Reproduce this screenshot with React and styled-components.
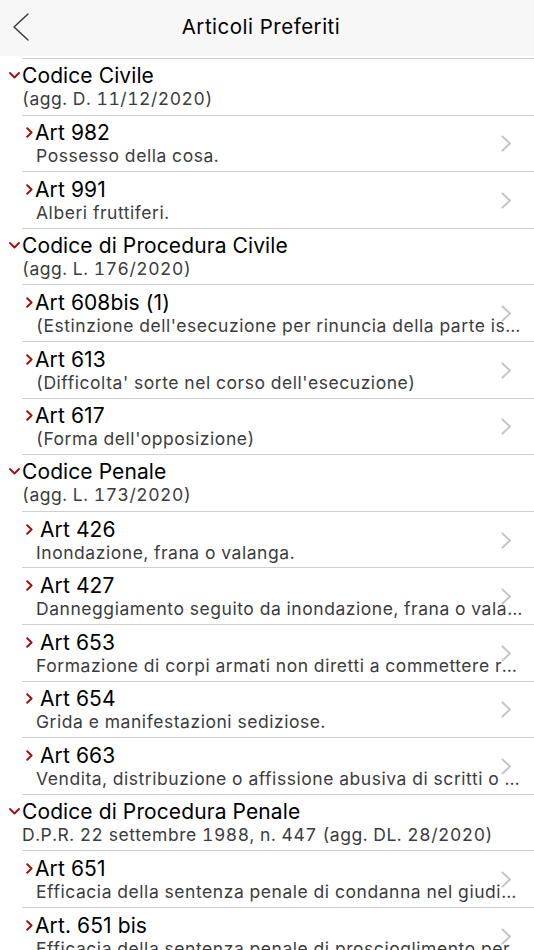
import React from 'react';
import styled, { createGlobalStyle } from 'styled-components';

const GlobalStyle = createGlobalStyle`
	html, body {
		margin: 0;
		padding: 0;
		background: #fff;
		overflow: hidden;
	}
	body {
		font-family: Inter, Roboto, "Liberation Sans", sans-serif;
		color: #000;
	}
`;

const Page = styled.div`
	width: 534px;
	height: 950px;
	overflow: hidden;
	background: #fff;
`;

const Header = styled.div`
	height: 56px;
	background: #f7f7f7;
	display: flex;
	align-items: center;
	justify-content: center;
	position: relative;
`;

const BackButton = styled.div`
	position: absolute;
	left: 11px;
	top: 12px;
	width: 20px;
	height: 30px;
	display: flex;
`;

const HeaderTitle = styled.h1`
	margin: 0 12px 0 0;
	font-size: 20.5px;
	font-weight: 400;
	letter-spacing: 0.5px;
	transform: translateY(-2px);
`;

const List = styled.div`
	padding-top: 2px;
`;

const Row = styled.div`
	height: 56.6px;
	box-sizing: border-box;
	margin-left: 22px;
	border-top: 1px solid #cfcfcf;
	display: flex;
	align-items: center;
	position: relative;
`;

const GroupRow = styled(Row)`
	margin-left: 0;
	border-top: none;
	&::before {
		content: '';
		position: absolute;
		top: 0;
		left: 22px;
		right: 0;
		border-top: 1px solid #cfcfcf;
	}
`;

const Texts = styled.div`
	flex: 1;
	min-width: 0;
	display: flex;
	flex-direction: column;
	padding-right: 8px;
	position: relative;
	z-index: 1;
`;

const TitleLine = styled.div`
	display: flex;
	align-items: center;
	height: 25px;
	padding-left: ${p => p.indent}px;
`;

const Title = styled.span`
	font-size: 21px;
	line-height: 25px;
	letter-spacing: 0.1px;
	white-space: nowrap;
	margin-left: ${p => p.gap || 0}px;
`;

const Subtitle = styled.span`
	font-size: 17.5px;
	line-height: 21px;
	letter-spacing: 0.55px;
	font-variant-numeric: tabular-nums;
	color: #3c3c3c;
	white-space: nowrap;
	overflow: hidden;
	text-overflow: ellipsis;
	padding-left: ${p => p.indent}px;
`;

const Disclosure = styled.div`
	position: absolute;
	right: 22px;
	top: 50%;
	width: 11px;
	height: 17px;
	margin-top: -8px;
	display: flex;
`;

const MarkerBox = styled.span`
	display: inline-flex;
	width: ${p => p.w}px;
	flex-shrink: 0;
	justify-content: center;
`;

const ChevronDown = () => (
	<svg width="11" height="7" viewBox="0 0 11 7">
		<path d="M1 1 L5.5 5.5 L10 1" fill="none" stroke="#a30d0d" strokeWidth="1.8" strokeLinecap="round" strokeLinejoin="round" />
	</svg>
);

const ChevronRightRed = () => (
	<svg width="7" height="11" viewBox="0 0 7 11">
		<path d="M1.2 1.2 L5.6 5.5 L1.2 9.8" fill="none" stroke="#a30d0d" strokeWidth="1.9" strokeLinecap="round" strokeLinejoin="round" />
	</svg>
);

const ChevronRightGray = () => (
	<svg width="11" height="17" viewBox="0 0 11 17">
		<path d="M1.5 1.5 L9 8.5 L1.5 15.5" fill="none" stroke="#c5c5c7" strokeWidth="2" strokeLinecap="round" strokeLinejoin="round" />
	</svg>
);

const BackIcon = () => (
	<svg width="20" height="30" viewBox="0 0 20 30">
		<path d="M17 2 L3 15 L17 28" fill="none" stroke="#3a3a3a" strokeWidth="1.5" strokeLinecap="round" strokeLinejoin="round" />
	</svg>
);

const groups = [
	{
		name: 'Codice Civile',
		info: '(agg. D. 11/12/2020)',
		items: [
			{ title: 'Art 982', desc: 'Possesso della cosa.' },
			{ title: 'Art 991', desc: 'Alberi fruttiferi.' },
		],
	},
	{
		name: 'Codice di Procedura Civile',
		info: '(agg. L. 176/2020)',
		items: [
			{ title: 'Art 608bis (1)', desc: "(Estinzione dell'esecuzione per rinuncia della parte istante)" },
			{ title: 'Art 613', desc: "(Difficolta' sorte nel corso dell'esecuzione)" },
			{ title: 'Art 617', desc: "(Forma dell'opposizione)" },
		],
	},
	{
		name: 'Codice Penale',
		info: '(agg. L. 173/2020)',
		spaced: true,
		items: [
			{ title: 'Art 426', desc: 'Inondazione, frana o valanga.' },
			{ title: 'Art 427', desc: 'Danneggiamento seguito da inondazione, frana o valanga.' },
			{ title: 'Art 653', desc: 'Formazione di corpi armati non diretti a commettere reati.' },
			{ title: 'Art 654', desc: 'Grida e manifestazioni sediziose.' },
			{ title: 'Art 663', desc: 'Vendita, distribuzione o affissione abusiva di scritti o disegni.' },
		],
	},
	{
		name: 'Codice di Procedura Penale',
		info: 'D.P.R. 22 settembre 1988, n. 447 (agg. DL. 28/2020)',
		items: [
			{ title: 'Art 651', desc: 'Efficacia della sentenza penale di condanna nel giudizio civile o amministrativo di danno' },
			{ title: 'Art. 651 bis', desc: 'Efficacia della sentenza penale di proscioglimento per particolare tenuità del fatto' },
		],
	},
];

const ArticleRow = ({ title, desc, spaced }) => (
	<Row>
		<Texts>
			<TitleLine indent={2}>
				<MarkerBox w={10}><ChevronRightRed /></MarkerBox>
				<Title gap={spaced ? 6 : 1}>{title}</Title>
			</TitleLine>
			<Subtitle indent={14}>{desc}</Subtitle>
		</Texts>
		<Disclosure><ChevronRightGray /></Disclosure>
	</Row>
);

const App = () => (
	<Page>
		<GlobalStyle />
		<Header>
			<BackButton><BackIcon /></BackButton>
			<HeaderTitle>Articoli Preferiti</HeaderTitle>
		</Header>
		<List>
			{groups.map(g => (
				<React.Fragment key={g.name}>
					<GroupRow>
						<Texts>
							<TitleLine indent={7}>
								<MarkerBox w={14}><ChevronDown /></MarkerBox>
								<Title gap={1}>{g.name}</Title>
							</TitleLine>
							<Subtitle indent={22}>{g.info}</Subtitle>
						</Texts>
					</GroupRow>
					{g.items.map(it => (
						<ArticleRow key={it.title} {...it} spaced={g.spaced} />
					))}
				</React.Fragment>
			))}
		</List>
	</Page>
);

export default App;
